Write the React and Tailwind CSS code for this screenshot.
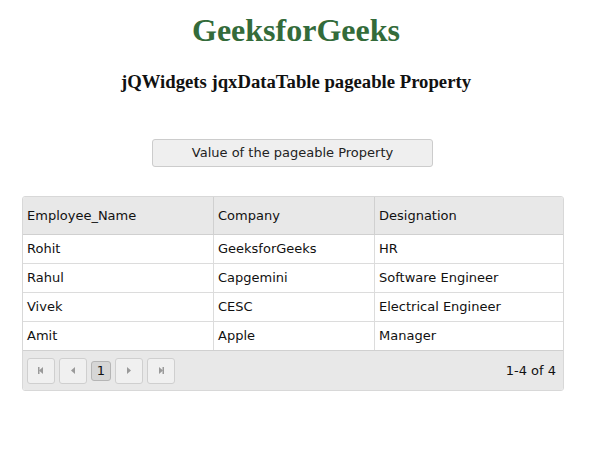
import React from "react";

const rows = [
  ["Rohit", "GeeksforGeeks", "HR"],
  ["Rahul", "Capgemini", "Software Engineer"],
  ["Vivek", "CESC", "Electrical Engineer"],
  ["Amit", "Apple", "Manager"],
];

const PagerButton = ({ children }) => (
  <div className="flex h-[26px] w-[28px] items-center justify-center rounded-[3px] border border-[#cfcfcf] bg-[#f0f0f0]">
    {children}
  </div>
);

const Arrow = ({ dir, bar }) => (
  <svg width="8" height="9" viewBox="0 0 8 9">
    {dir === "left" ? (
      <>
        <polygon points="6,1 2,4.5 6,8" fill="#9a9a9a" />
        {bar && <rect x="1" y="1" width="1.5" height="7" fill="#9a9a9a" />}
      </>
    ) : (
      <>
        <polygon points="2,1 6,4.5 2,8" fill="#9a9a9a" />
        {bar && <rect x="5.5" y="1" width="1.5" height="7" fill="#9a9a9a" />}
      </>
    )}
  </svg>
);

export default function App() {
  return (
    <div className="min-h-[462px] w-[592px] bg-white">
      <div className="flex flex-col items-center font-['Liberation_Serif',serif]">
        <h1 className="mt-[11px] text-[32px] font-bold leading-[38px] text-[#336b3a]">GeeksforGeeks</h1>
        <h3 className="mt-[22px] text-[18.7px] font-bold leading-[22px] text-[#111]">
          jQWidgets jqxDataTable pageable Property
        </h3>
      </div>
      <div className="mt-[46px] flex justify-center pr-[7px] font-['DejaVu_Sans',sans-serif]">
        <div className="flex h-[28px] w-[281px] items-center justify-center rounded-[3px] border border-[#cccccc] bg-[#efefef] text-[13px] text-[#222]">
          Value of the pageable Property
        </div>
      </div>
      <div className="ml-[22px] mt-[29px] w-[542px] overflow-hidden rounded-[3px] border border-[#d8d8d8] font-['DejaVu_Sans',sans-serif] text-[13px] text-[#111]">
        <div className="grid h-[38px] grid-cols-[191px_161px_1fr] border-b border-[#d0d0d0] bg-[#e8e8e8]">
          <div className="flex items-center border-r border-[#d0d0d0] pl-[4px]">Employee_Name</div>
          <div className="flex items-center border-r border-[#d0d0d0] pl-[4px]">Company</div>
          <div className="flex items-center pl-[4px]">Designation</div>
        </div>
        {rows.map((r, i) => (
          <div
            key={i}
            className={`grid grid-cols-[191px_161px_1fr] bg-white ${i < 3 ? "h-[29px] border-b border-[#dcdcdc]" : "h-[28px]"}`}
          >
            <div className="flex items-center border-r border-[#dcdcdc] pl-[4px]">{r[0]}</div>
            <div className="flex items-center border-r border-[#dcdcdc] pl-[4px]">{r[1]}</div>
            <div className="flex items-center pl-[4px]">{r[2]}</div>
          </div>
        ))}
        <div className="flex h-[40px] items-center justify-between border-t border-[#d0d0d0] bg-[#e8e8e8] pl-[4px] pr-[7px]">
          <div className="flex items-center gap-[4px]">
            <PagerButton><Arrow dir="left" bar /></PagerButton>
            <PagerButton><Arrow dir="left" /></PagerButton>
            <div className="flex h-[20px] w-[20px] items-center justify-center rounded-[3px] border border-[#b5b5b5] bg-[#d6d6d6] text-[13px]">
              1
            </div>
            <PagerButton><Arrow dir="right" /></PagerButton>
            <PagerButton><Arrow dir="right" bar /></PagerButton>
          </div>
          <div>1-4 of 4</div>
        </div>
      </div>
    </div>
  );
}
